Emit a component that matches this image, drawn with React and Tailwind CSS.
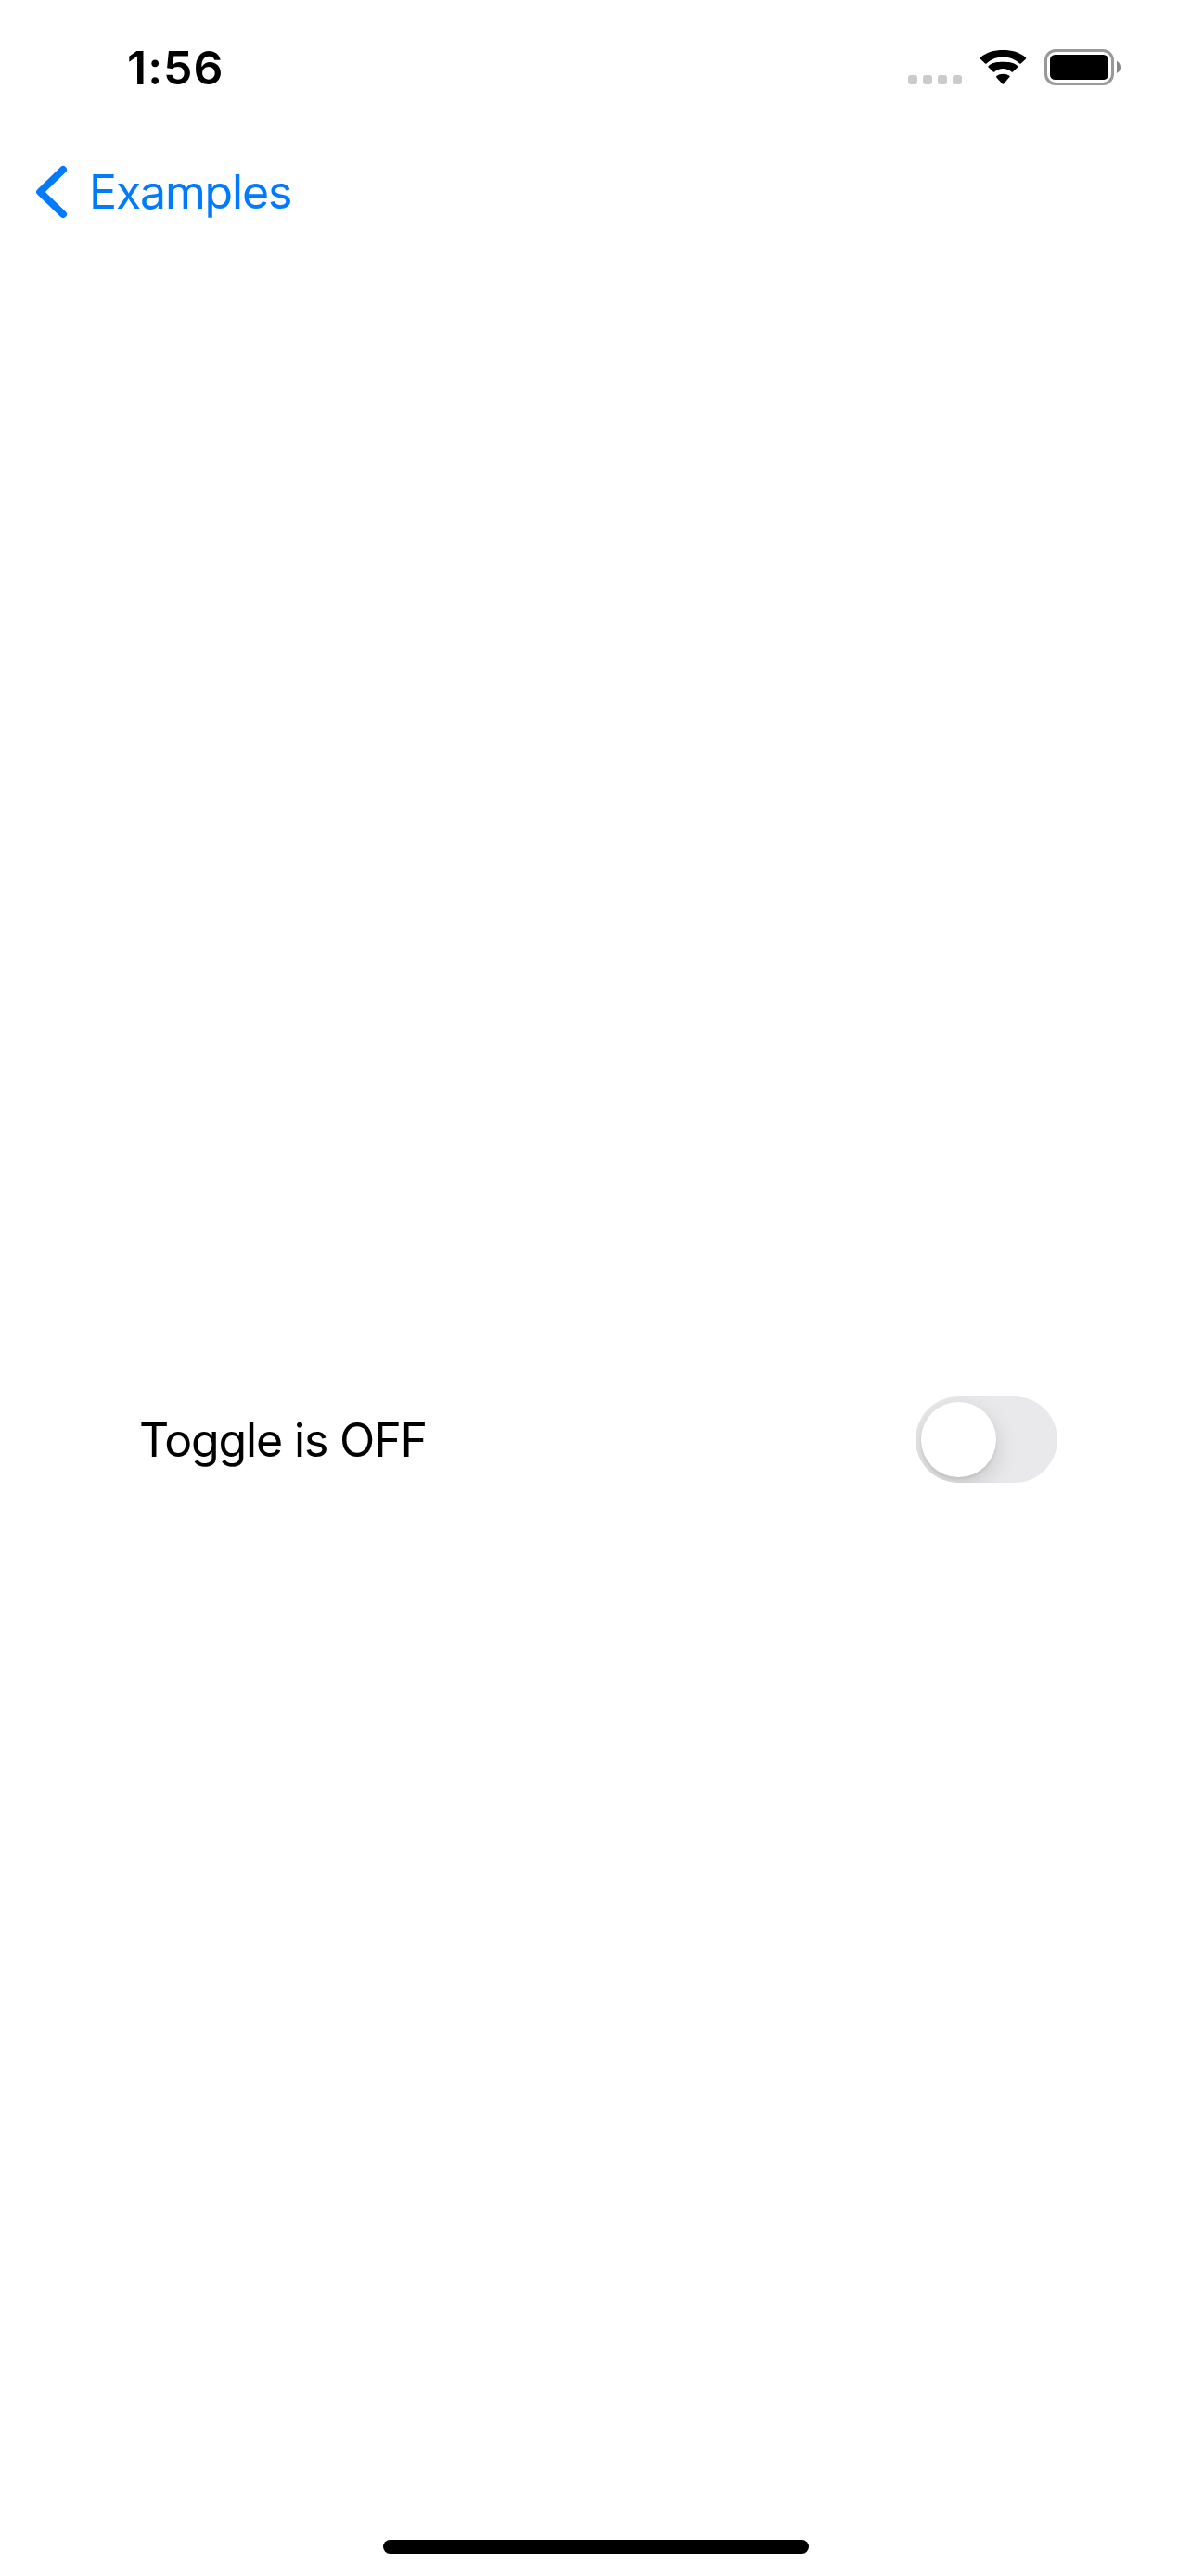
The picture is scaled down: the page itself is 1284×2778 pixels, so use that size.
import { useState } from "react";

function StatusBar() {
  return (
    <header className="flex h-[141px] items-start justify-between pl-[137px] pr-[75px] text-black">
      <span className="mt-[43px] whitespace-nowrap text-[50px] leading-[60px] font-semibold tracking-[1px]">1:56</span>
      <div className="mt-[53px] flex h-[39px] items-start">
        <div className="mt-7 flex gap-1.5">
          <i className="size-2.5 rounded-[3px] bg-[#cbcbcb]" />
          <i className="size-2.5 rounded-[3px] bg-[#cbcbcb]" />
          <i className="size-2.5 rounded-[3px] bg-[#cbcbcb]" />
          <i className="size-2.5 rounded-[3px] bg-[#cbcbcb]" />
        </div>
        <svg className="ml-[19px] h-[39px] w-[51px]" viewBox="0 0 51 39" aria-label="Wi-Fi">
          <path d="M25.4 8.4C32.2 8.4 38.5 11 43.3 15.5Q44 16.2 44.7 15.5L50 10.6Q50.7 9.9 50 9.2C43.5 3.2 34.6 1 25.4 1S7.300 3.200.8 9.200Q.1 9.900.8 10.600L6.100 15.500Q6.800 16.200 7.500 15.500C12.300 11 18.600 8.400 25.400 8.400Z" />
          <path d="M25.400 21.100C29 21.100 32 22.300 34.600 24.500Q35.300 25.100 36 24.400L41.200 19.600Q41.900 18.900 41.200 18.200C36.900 14.200 31.500 13.800 25.400 13.800S13.900 14.200 9.600 18.200Q8.900 18.900 9.600 19.600L14.800 24.400Q15.500 25.100 16.200 24.500C18.800 22.300 21.800 21.100 25.400 21.100Z" />
          <path d="M32.400 28.700Q33.100 29.400 32.400 30.100L26.100 37.500Q25.400 38.200 24.700 37.500L18.400 30.800Q17.700 29.700 18.400 29.100C22.200 25.900 28.600 25.900 32.400 28.700Z" />
        </svg>
        <svg className="ml-[19px] h-[39px] w-[83px]" viewBox="0 0 83 39" aria-label="Battery">
          <rect x="1.500" y="1.500" width="72" height="36" rx="10.500" fill="none" stroke="#999" strokeWidth="3" />
          <rect x="6" y="6" width="63" height="27" rx="5.500" />
          <path d="M78 12.500Q82 15 82 19.500T78 26Z" fill="#888" />
        </svg>
      </div>
    </header>
  );
}

export default function App() {
  const [on, setOn] = useState(false);
  return (
    <div className="flex h-[2778px] w-[1284px] flex-col bg-white font-['Inter',sans-serif] text-black">
      <StatusBar />
      <nav className="flex h-[132px] items-center pl-[39px] text-[#007aff]">
        <button className="flex items-center">
          <svg className="h-[58px] w-[34px]" viewBox="0 0 34 58" fill="none" stroke="currentColor" strokeWidth="8" strokeLinecap="round" strokeLinejoin="round">
            <path d="M29 5L4.200 29L29 53" />
          </svg>
          <span className="ml-[23px] whitespace-nowrap text-[50px] leading-[60px] tracking-[-1.15px]">Examples</span>
        </button>
      </nav>
      <main className="flex flex-1 items-center pt-[156px] pl-[150px] pr-[144px]">
        <div className="flex w-full items-center justify-between">
          <span className="whitespace-nowrap text-[50px] leading-[60px] tracking-[-1.15px]">Toggle is {on ? "ON" : "OFF"}</span>
          <button
            role="switch"
            aria-checked={on}
            aria-label="Toggle"
            onClick={() => setOn(!on)}
            className={`flex h-[93px] w-[153px] items-center overflow-hidden rounded-full px-1.5 ${on ? "justify-end bg-[#34c759]" : "bg-[#e9e9eb]"}`}
          >
            <span className="size-[81px] rounded-full bg-white shadow-[0_9px_24px_rgba(0,0,0,0.15),0_3px_3px_rgba(0,0,0,0.06)]" />
          </button>
        </div>
      </main>
      <footer className="flex h-[102px] items-end justify-center pb-6">
        <div className="h-[15px] w-[459px] rounded-full bg-black" />
      </footer>
    </div>
  );
}
